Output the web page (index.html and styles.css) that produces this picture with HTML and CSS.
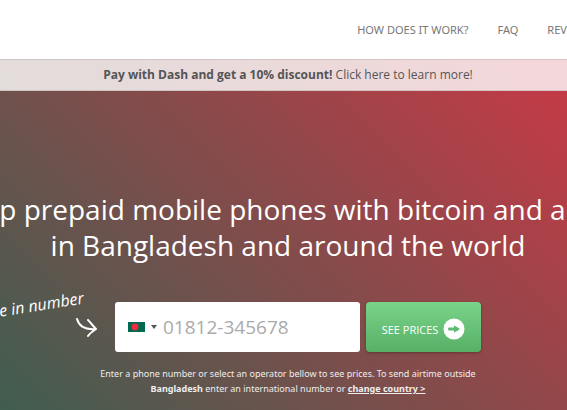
FILE: index.html
```
<!DOCTYPE html>
<html lang="en">
<head>
    <meta charset="UTF-8">
    <meta name="viewport" content="width=device-width, initial-scale=1.0">
    <title>Top up prepaid mobile phones in Bangladesh</title>
    <link rel="stylesheet" href="styles.css">
</head>
<body>
    <header class="header">
        <nav class="nav">
            <a href="#how">HOW DOES IT WORK?</a>
            <a href="#faq">FAQ</a>
            <a href="#reviews">REVIEWS</a>
        </nav>
    </header>

    <main class="hero">
        <a class="banner" href="#dash"><strong>Pay with Dash and get a 10% discount!</strong> Click here to learn more!</a>

        <div class="hero-content">
            <h1 class="title">
                <span>Top up prepaid mobile phones with bitcoin and altcoins</span>
                <span>in Bangladesh and around the world</span>
            </h1>

            <div class="lookup">
                <form class="form">
                    <!-- Handwritten note next to the input -->
                    <div class="note">
                        <span class="note-text">Type in number</span>
                        <svg class="note-arrow" viewBox="0 0 22 22" width="22" height="22" aria-hidden="true">
                            <path d="M1 2C3 9 9 13 20 12M12 3C15 6 17 9 20 12C17 14 14 16 12 19" fill="none" stroke="#fff" stroke-width="2" stroke-linecap="round" stroke-linejoin="round"/>
                        </svg>
                    </div>
                    <div class="phone">
                        <button class="country" type="button" aria-label="Bangladesh">
                            <svg viewBox="0 0 17 10" width="17" height="10" aria-hidden="true">
                                <rect width="17" height="10" fill="#006a4e"/>
                                <circle cx="7" cy="5" r="3.4" fill="#f42a41"/>
                            </svg>
                            <span class="caret"></span>
                        </button>
                        <input class="phone-input" type="tel" placeholder="01812-345678" aria-label="Phone number">
                    </div>
                    <button class="btn" type="submit">
                        SEE PRICES
                        <svg viewBox="0 0 22 22" width="22" height="22" aria-hidden="true">
                            <circle cx="11" cy="11" r="10.5" fill="#fff"/>
                            <path d="M5.5 9.5H11V7.5Q14 8.5 17 11Q14 13.5 11 14.5V12.5H5.5Q4.5 11 5.5 9.5Z" fill="#5fb96f"/>
                        </svg>
                    </button>
                </form>
                <p class="help">Enter a phone number or select an operator bellow to see prices. To send airtime outside <strong>Bangladesh</strong> enter an international number or <a href="#country">change country &gt;</a></p>
            </div>
        </div>
    </main>
</body>
</html>
```
FILE: styles.css
```
body {
    margin: 0;
    min-height: 100vh;
    display: flex;
    flex-direction: column;
    font-family: "Open Sans", "Noto Sans", sans-serif;
    background: #fff;
    overflow: hidden;
}

.header {
    height: 59px;
    display: flex;
    align-items: center;
}

.nav {
    display: flex;
    gap: 29px;
    margin-left: 63%;
    white-space: nowrap;
}

.nav a {
    color: #777;
    font-family: "Noto Sans", sans-serif;
    font-size: 11px;
    text-decoration: none;
}

.hero {
    flex: 1;
    background: linear-gradient(45deg, #405e50, #c83946);
}

.banner {
    display: block;
    padding: 0 0 0 9px;
    border-top: 1px solid rgba(0, 0, 0, 0.1);
    border-bottom: 1px solid rgba(0, 0, 0, 0.1);
    background: rgba(255, 255, 255, 0.8);
    color: #555;
    font-size: 12px;
    line-height: 30px;
    text-align: center;
    text-decoration: none;
}

.hero-content {
    padding: 100px 0 12px 9px;
}

.title {
    margin: 0;
    color: #fff;
    font-size: 28px;
    font-weight: normal;
    line-height: 36px;
    white-space: nowrap;
}

.title span {
    display: flex;
    justify-content: center;
}

.lookup {
    max-width: 386px;
    margin: 39px auto 0;
}

.form {
    position: relative;
    display: flex;
    gap: 6px;
    margin-left: 20px;
}

.note {
    position: absolute;
    right: 100%;
    top: -9px;
    width: 140px;
    padding-right: 17px;
    display: flex;
    flex-direction: column;
    align-items: flex-end;
    color: #fff;
}

.note-text {
    padding-right: 14px;
    font-size: 16px;
    font-style: italic;
    line-height: 24px;
    transform: rotate(-9deg);
    white-space: nowrap;
}

.phone {
    flex: 1;
    min-width: 0;
    display: flex;
    align-items: center;
    height: 50px;
    border-radius: 3px;
    background: #fff;
}

.country {
    display: flex;
    align-items: center;
    gap: 6px;
    padding: 0 0 0 13px;
    border: none;
    background: none;
    cursor: pointer;
}

.caret {
    border: 3px solid transparent;
    border-top: 4px solid #555;
    border-bottom: none;
}

.phone-input {
    flex: 1;
    min-width: 0;
    padding: 0 6px;
    border: none;
    background: none;
    color: #555;
    font-family: inherit;
    font-size: 19px;
    outline: none;
}

.phone-input::placeholder {
    color: #aaa;
}

.btn {
    display: flex;
    flex: none;
    align-items: center;
    justify-content: center;
    gap: 5px;
    width: 115px;
    padding: 4px 0 0;
    border: none;
    border-radius: 4px;
    background: linear-gradient(#79d388, #57b066);
    box-shadow: 0 1px 3px rgba(0, 0, 0, 0.3);
    color: #fff;
    font-family: inherit;
    font-size: 11px;
    white-space: nowrap;
    cursor: pointer;
}

.help {
    margin: 14px 0 0;
    color: #eee;
    font-family: "Noto Sans", sans-serif;
    font-size: 9px;
    line-height: 15px;
    text-align: center;
}

.help a {
    color: #eee;
    font-weight: bold;
}
```
